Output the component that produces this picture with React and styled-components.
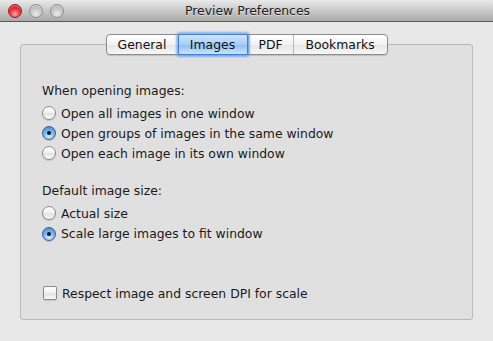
import React from "react";
import styled, { createGlobalStyle } from "styled-components";

const Global = createGlobalStyle`
  html, body { margin: 0; padding: 0; }
  body { background: #e8e8e8; font-family: "DejaVu Sans", "Lucida Grande", sans-serif; }
`;

const FS = "12.4px";

const Window = styled.div`
  width: 493px;
  height: 341px;
  background: #e8e8e8;
  display: flex;
  flex-direction: column;
  overflow: hidden;
`;

const TitleBar = styled.div`
  height: 21px;
  border-bottom: 1px solid #595959;
  background: linear-gradient(#e9e9e9, #a9a9a9);
  display: grid;
  grid-template-columns: 1fr auto 1fr;
  align-items: center;
  padding: 0 8px;
`;

const Lights = styled.div`
  display: flex;
  gap: 7px;
`;

const Light = styled.div`
  width: 14px;
  height: 14px;
  border-radius: 50%;
  box-sizing: border-box;
  border: 1px solid ${(p) => (p.$red ? "#8c1a1a" : "#8e8e8e")};
  background: ${(p) =>
    p.$red
      ? "radial-gradient(circle at 50% 75%, #ffb0b0 0%, #f0303a 45%, #b0101a 100%)"
      : "radial-gradient(circle at 50% 75%, #ececec 0%, #c6c6c6 50%, #a2a2a2 100%)"};
  box-shadow: inset 0 1px 1px rgba(255,255,255,0.5);
`;

const Title = styled.div`
  font-size: ${FS};
  color: #1c1c1c;
  text-shadow: 0 1px 0 rgba(255,255,255,0.5);
  transform: translateX(1px);
`;

const Body = styled.div`
  flex: 1;
  padding: 12px 20px 21px 20px;
  display: flex;
  flex-direction: column;
`;

const TabsRow = styled.div`
  display: flex;
  justify-content: center;
  margin-bottom: -11px;
  position: relative;
  z-index: 1;
`;

const Tabs = styled.div`
  display: flex;
  height: 21px;
  box-sizing: border-box;
  border: 1px solid #8c8c8c;
  border-radius: 4px;
  background: linear-gradient(#ffffff, #f3f3f3 50%, #e6e6e6 51%, #f7f7f7);
  box-shadow: 0 1px 1px rgba(0,0,0,0.15);
`;

const Tab = styled.div`
  width: ${(p) => p.$w}px;
  box-sizing: border-box;
  display: flex;
  align-items: center;
  justify-content: center;
  font-size: ${FS};
  color: #111;
  border-left: ${(p) => (p.$first ? "none" : "1px solid #b8b8b8")};
  ${(p) =>
    p.$active &&
    `
    background: linear-gradient(#cfe6ff, #a7cdfa 50%, #8dbef8 51%, #c8e4ff);
    border: 1px solid #3f7fd8;
    margin: -1px 0;
    height: 21px;
    box-shadow: 0 0 2px 2px rgba(90,150,240,0.65);
    border-radius: 2px;
    position: relative;
    z-index: 1;
  `}
`;

const GroupBox = styled.div`
  flex: 1;
  border: 1px solid #b9b9b9;
  border-radius: 3px;
  background: #e0e0e0;
  padding: 36px 21px 0 21px;
  display: flex;
  flex-direction: column;
`;

const SectionLabel = styled.div`
  font-size: ${FS};
  line-height: 20px;
  color: #1a1a1a;
  margin-bottom: 2px;
  margin-top: ${(p) => p.$mt || 0}px;
`;

const Row = styled.label`
  display: flex;
  align-items: center;
  height: ${(p) => p.$h || 20}px;
  font-size: ${FS};
  color: #1a1a1a;
  gap: 5px;
  margin-top: ${(p) => p.$mt || 0}px;
`;

const Radio = styled.span`
  width: 14px;
  height: 14px;
  flex: none;
  border-radius: 50%;
  box-sizing: border-box;
  display: flex;
  align-items: center;
  justify-content: center;
  border: 1px solid ${(p) => (p.$on ? "#3a5f95" : "#8a8a8a")};
  background: ${(p) =>
    p.$on
      ? "radial-gradient(circle at 50% 80%, #d4ecff 0%, #78b2ee 50%, #3f7ed0 100%)"
      : "linear-gradient(#ffffff, #f0f0f0 50%, #e2e2e2 55%, #fafafa)"};
  box-shadow: 0 1px 1px rgba(0,0,0,0.15);
  &::after {
    content: "";
    display: ${(p) => (p.$on ? "block" : "none")};
    width: 4px;
    height: 4px;
    border-radius: 50%;
    background: #111;
  }
`;

const Check = styled.span`
  width: 14px;
  height: 14px;
  flex: none;
  box-sizing: border-box;
  border-radius: 2px;
  border: 1px solid #8a8a8a;
  background: linear-gradient(#ffffff, #f0f0f0 50%, #e2e2e2 55%, #fafafa);
  box-shadow: 0 1px 1px rgba(0,0,0,0.12);
  margin-left: 1px;
`;

export default function App() {
  return (
    <>
      <Global />
      <Window>
        <TitleBar>
          <Lights>
            <Light $red />
            <Light />
            <Light />
          </Lights>
          <Title>Preview Preferences</Title>
          <div />
        </TitleBar>
        <Body>
          <TabsRow>
            <Tabs>
              <Tab $w={71} $first>General</Tab>
              <Tab $w={70} $active>Images</Tab>
              <Tab $w={45}>PDF</Tab>
              <Tab $w={94}>Bookmarks</Tab>
            </Tabs>
          </TabsRow>
          <GroupBox>
            <SectionLabel>When opening images:</SectionLabel>
            <Row><Radio />Open all images in one window</Row>
            <Row><Radio $on />Open groups of images in the same window</Row>
            <Row><Radio />Open each image in its own window</Row>
            <SectionLabel $mt={18}>Default image size:</SectionLabel>
            <Row><Radio />Actual size</Row>
            <Row $h={21}><Radio $on />Scale large images to fit window</Row>
            <Row $mt={39}><Check />Respect image and screen DPI for scale</Row>
          </GroupBox>
        </Body>
      </Window>
    </>
  );
}
